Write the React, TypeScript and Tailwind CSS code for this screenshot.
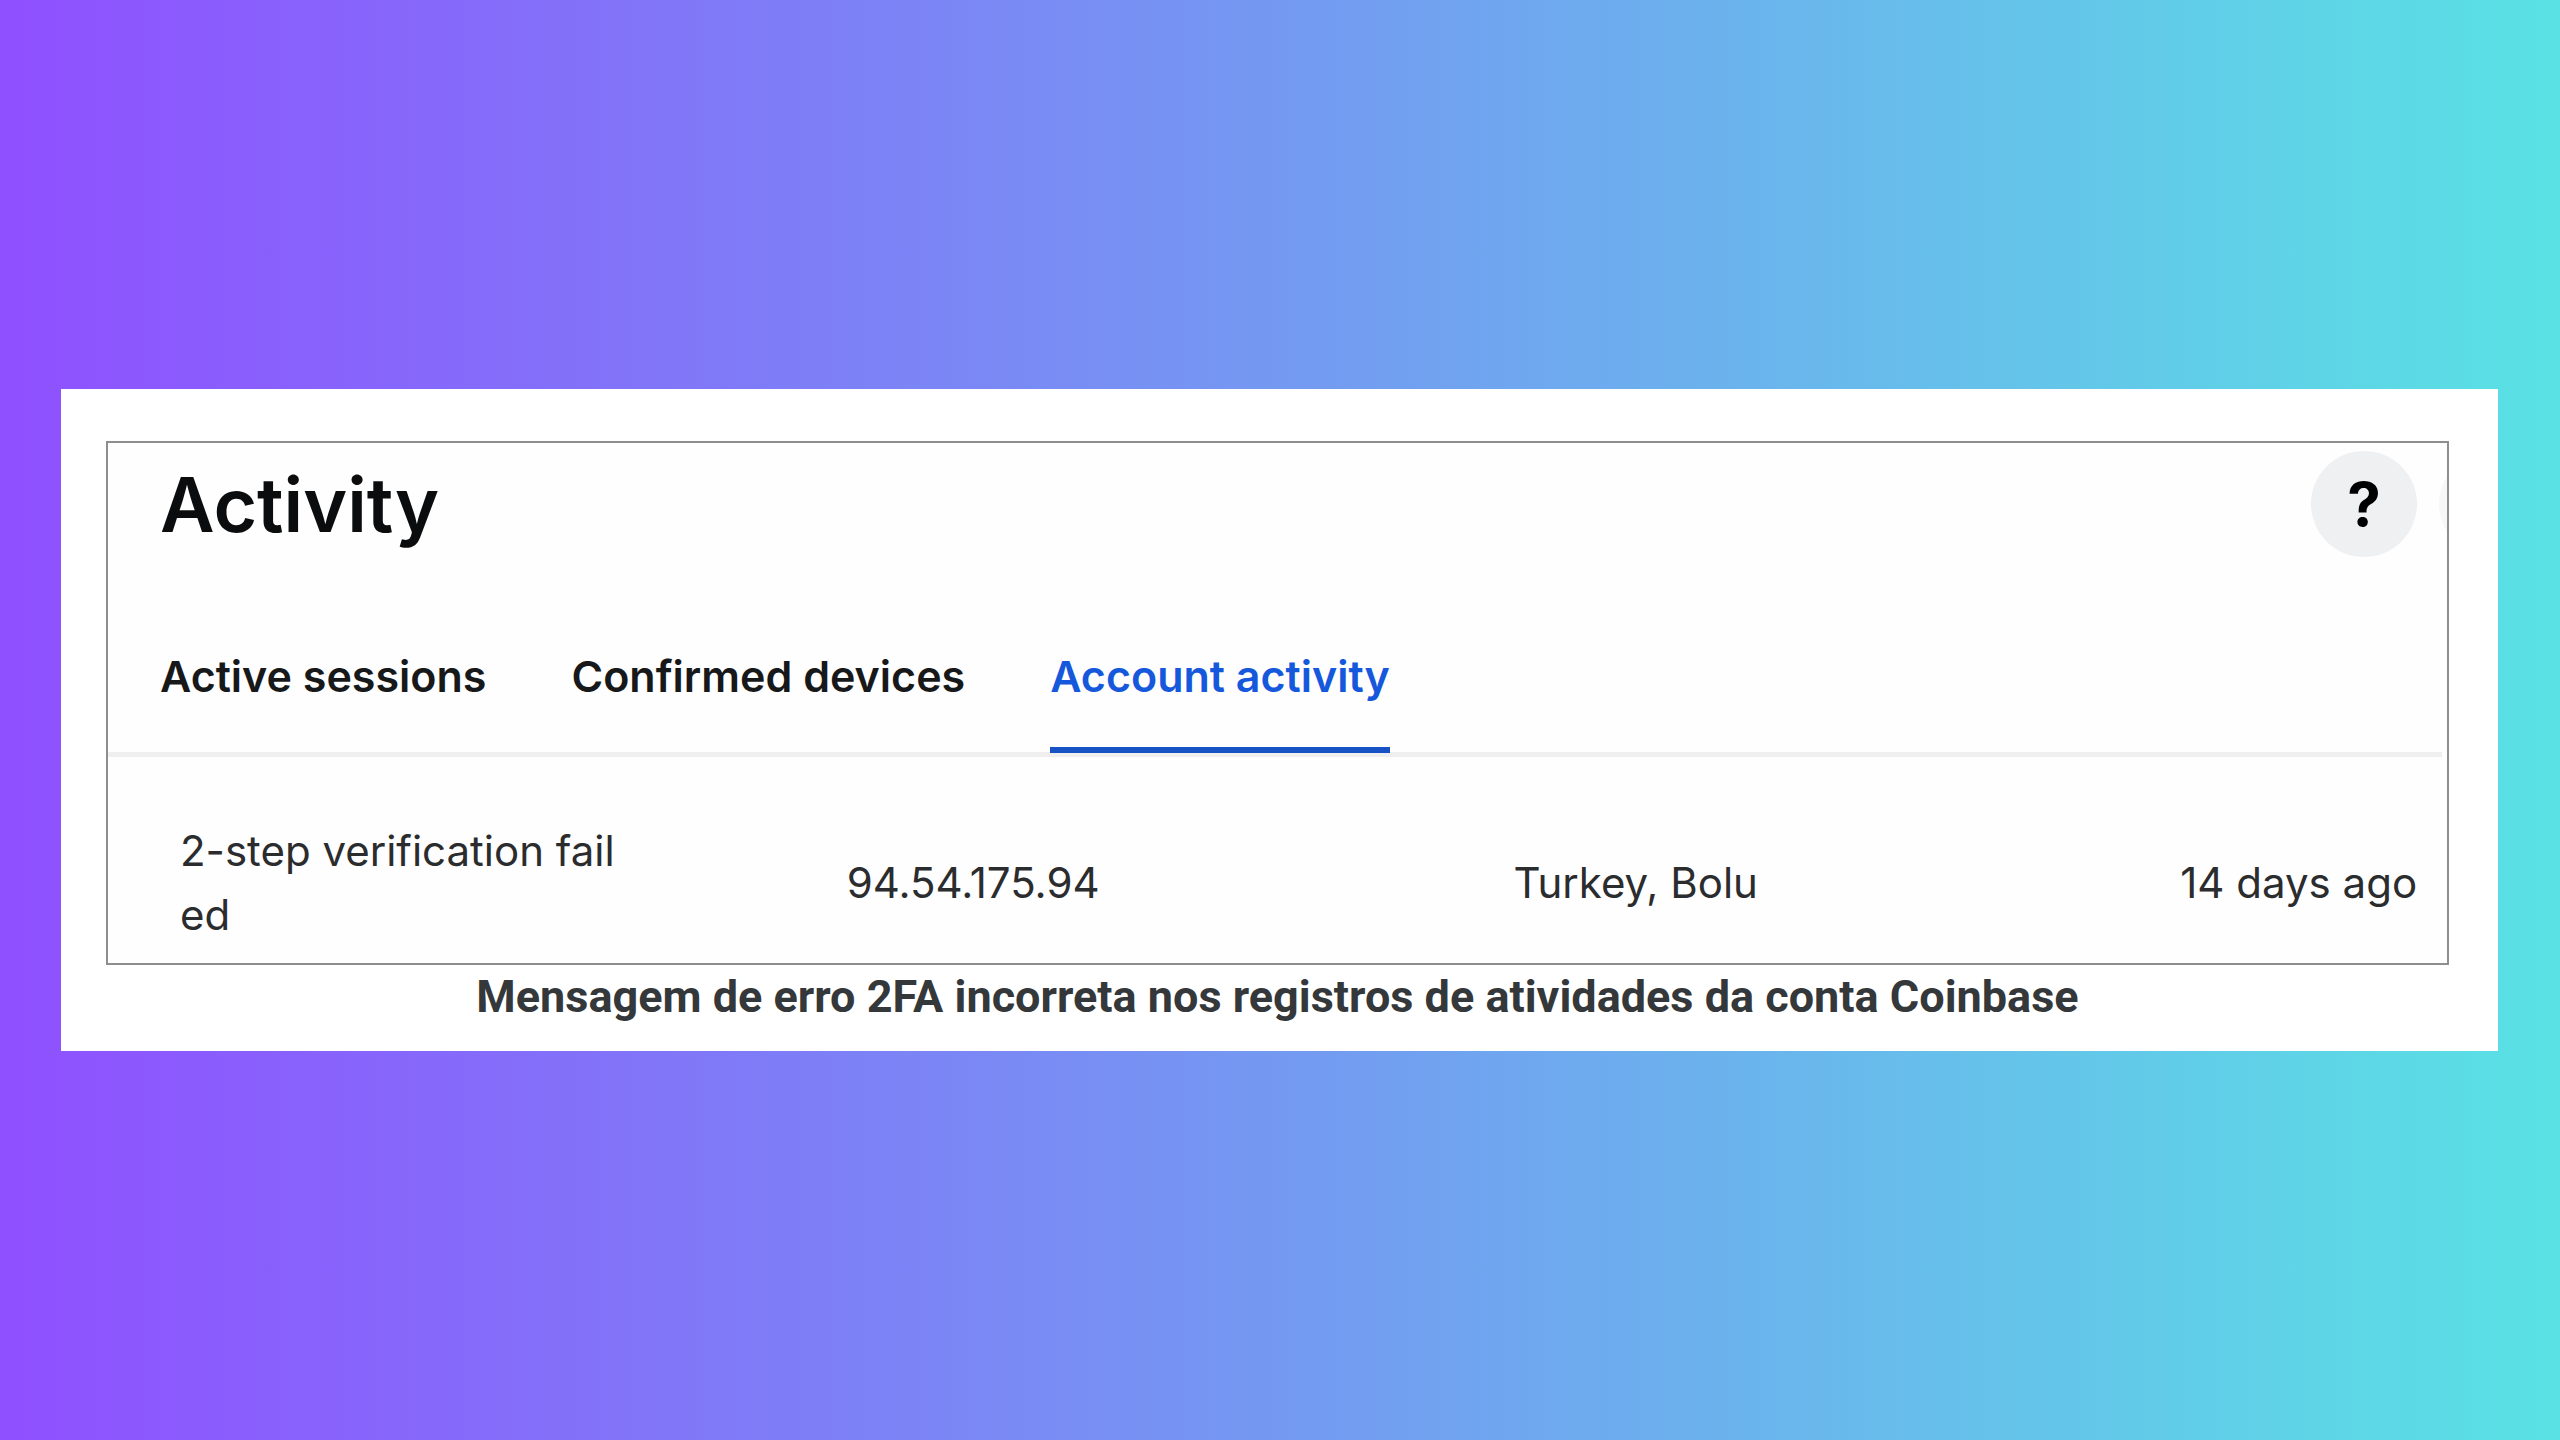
import { useState } from "react";

type Activity = {
  event: string;
  ip: string;
  location: string;
  time: string;
};

const tabs = ["Active sessions", "Confirmed devices", "Account activity"];

const activities: Activity[] = [
  {
    event: "2-step verification failed",
    ip: "94.54.175.94",
    location: "Turkey, Bolu",
    time: "14 days ago",
  },
];

export default function App() {
  const [activeTab, setActiveTab] = useState("Account activity");

  return (
    <main className="flex min-h-screen items-center bg-[linear-gradient(90deg,#8f50ff,#59e2e4)] pr-[62px] pl-[61px]">
      <figure className="w-full bg-white pt-[52px] pr-[49px] pb-[22px] pl-[45px]">
        <section className="overflow-hidden border-2 border-[#8e8e8e] bg-[#fefefe] font-['Inter',sans-serif]">
          <header className="flex items-center pt-2 pl-[52px]">
            <h1 className="flex-1 text-[75px] leading-none font-semibold text-[#0b0c0d]">
              Activity
            </h1>

            <button
              aria-label="Help"
              className="size-[106px] rounded-full bg-[#eff0f2] text-[60px] leading-none font-bold text-black"
            >
              ?
            </button>

            {/* next action runs off the edge of the panel */}
            <button
              aria-label="Notifications"
              className="-mr-[98px] ml-[22px] size-[106px] rounded-full bg-[#f7f7f8]"
            />
          </header>

          <nav className="mt-[93px] mr-[5px] flex gap-[85px] border-b-[5px] border-[#efefef] pl-[52px] text-[43px] leading-[52px] font-semibold">
            {tabs.map((tab) => (
              <button
                key={tab}
                onClick={() => setActiveTab(tab)}
                className={`-mb-px border-b-[6px] pb-[45px] ${
                  activeTab === tab
                    ? "border-[#1652c4] text-[#1558dc]"
                    : "border-transparent text-[#17181a]"
                }`}
              >
                {tab}
              </button>
            ))}
          </nav>

          <div className="pt-[62px] pb-4 pl-[72px]">
            <table className="w-full table-fixed text-left text-[42px] leading-[64px] text-[#2b2c2e]">
              <tbody>
                {activities.map((activity) => (
                  <tr key={activity.ip}>
                    <td className="w-5/17 pr-[222px] break-all">
                      {activity.event}
                    </td>
                    <td className="w-5/17">{activity.ip}</td>
                    <td className="w-5/17">{activity.location}</td>
                    <td className="whitespace-nowrap">{activity.time}</td>
                  </tr>
                ))}
              </tbody>
            </table>
          </div>
        </section>

        <figcaption className="text-center font-['Roboto',sans-serif] text-[45px] leading-[64px] font-bold text-[#35383a]">
          Mensagem de erro 2FA incorreta nos registros de atividades da conta
          Coinbase
        </figcaption>
      </figure>
    </main>
  );
}
